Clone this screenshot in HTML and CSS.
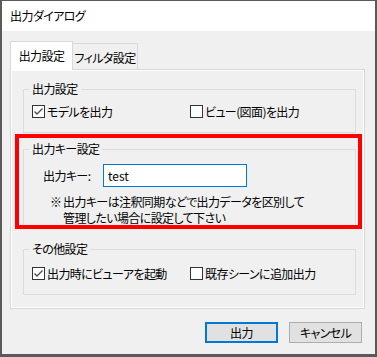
FILE: index.html
```html
<!DOCTYPE html>
<html lang="ja">
<head>
    <meta charset="UTF-8">
    <meta name="viewport" content="width=device-width, initial-scale=1.0">
    <title>出力ダイアログ</title>
    <link rel="stylesheet" href="styles.css">
</head>
<body>

    <div class="window">
        <div class="titlebar">出力ダイアログ</div>

        <div class="body">
            <div class="tabs">
                <div class="tab active">出力設定</div>
                <div class="tab">フィルタ設定</div>
            </div>

            <div class="panel">
                <fieldset class="group group-output">
                    <legend>出力設定</legend>
                    <div class="check-row">
                        <label class="check">
                            <span class="box checked">
                                <svg width="11" height="11" viewBox="0 0 11 11"><path d="M1.5 5.5 L4 8 L9.5 2.5" fill="none" stroke="#4a4a4a" stroke-width="1.3"/></svg>
                            </span>
                            モデルを出力
                        </label>
                        <label class="check">
                            <span class="box"></span>
                            ビュー(図面)を出力
                        </label>
                    </div>
                </fieldset>

                <fieldset class="group group-key">
                    <legend>出力キー設定</legend>
                    <div class="key-row">
                        <label for="outputKey" class="key-label">出力キー:</label>
                        <input type="text" id="outputKey" class="key-input" value="test">
                    </div>
                    <div class="note">
                        <span class="note-mark">※</span>
                        <span class="note-text">出力キーは注釈同期などで出力データを区別して<br>管理したい場合に設定して下さい</span>
                    </div>
                </fieldset>

                <fieldset class="group group-other">
                    <legend>その他設定</legend>
                    <div class="check-row">
                        <label class="check">
                            <span class="box checked">
                                <svg width="11" height="11" viewBox="0 0 11 11"><path d="M1.5 5.5 L4 8 L9.5 2.5" fill="none" stroke="#4a4a4a" stroke-width="1.3"/></svg>
                            </span>
                            出力時にビューアを起動
                        </label>
                        <label class="check">
                            <span class="box"></span>
                            既存シーンに追加出力
                        </label>
                    </div>
                </fieldset>
            </div>

            <div class="actions">
                <button class="btn primary">出力</button>
                <button class="btn">キャンセル</button>
            </div>
        </div>

        <!-- annotation frame -->
        <div class="highlight"></div>
    </div>

</body>
</html>
```

FILE: styles.css
```css
/* General Styles */
body {
    margin: 0;
    padding: 0;
    font-family: "Noto Sans CJK JP", "Noto Sans", sans-serif;
    font-size: 12px;
    font-feature-settings: "palt";
    letter-spacing: -0.6px;
    color: #000;
}

.window {
    position: relative;
    width: 377px;
    height: 357px;
    box-sizing: border-box;
    background-color: #f0f0f0;
    border-top: 1px solid #5a5a5a;
    border-left: 2px solid #5a5a5a;
    border-right: 2px solid #5a5a5a;
    border-bottom: 3px solid #5a5a5a;
}

.titlebar {
    height: 30px;
    background-color: #fff;
    padding-left: 8px;
    display: flex;
    align-items: center;
    line-height: 14px;
}

.body {
    padding: 10px 10px 0 8px;
}

/* Tabs */
.tabs {
    display: flex;
    align-items: flex-end;
    height: 29px;
    margin-bottom: -1px;
    position: relative;
    z-index: 1;
}

.tab {
    box-sizing: border-box;
    border: 1px solid #d9d9d9;
    border-bottom: none;
    display: flex;
    align-items: center;
    justify-content: center;
    white-space: nowrap;
}

.tab.active {
    width: 63px;
    height: 29px;
    background-color: #fff;
    padding-bottom: 1px;
}

.tab:not(.active) {
    width: 65px;
    height: 26px;
    margin-bottom: 1px;
    border-left: none;
    padding-top: 1px;
}

.panel {
    box-sizing: border-box;
    width: 355px;
    height: 240px;
    border: 1px solid #d9d9d9;
    box-shadow: inset 0 0 0 1px #fff;
    padding: 12px 8px 0 12px;
}

/* Group boxes */
.group {
    margin: 0;
    min-width: 0;
    border: 1px solid #dcdcdc;
    padding: 0 0 0 5px;
}

.group legend {
    padding: 0 3px;
    line-height: 14px;
}

.group-output {
    padding-top: 7px;
    padding-bottom: 12px;
}

.group-key {
    margin-top: 9px;
    padding-top: 8px;
    padding-bottom: 1px;
}

.group-other {
    margin-top: 14px;
    padding-top: 9px;
    padding-bottom: 12px;
}

.check-row {
    display: grid;
    grid-template-columns: 158px 1fr;
    margin-left: 3px;
    height: 17px;
}

.check {
    display: flex;
    align-items: center;
    gap: 2px;
    line-height: 17px;
}

.box {
    box-sizing: border-box;
    width: 13px;
    height: 13px;
    border: 1px solid #333;
    background-color: #fff;
    display: flex;
    align-items: center;
    justify-content: center;
}

.key-row {
    display: flex;
    align-items: center;
    margin-left: 14px;
}

.key-label {
    width: 60px;
}

.key-input {
    box-sizing: border-box;
    width: 144px;
    height: 23px;
    margin: 0;
    border: 1px solid #0078d7;
    padding: 0 4px;
    font-family: inherit;
    font-size: 12px;
    font-feature-settings: "palt";
    letter-spacing: 0;
    outline: none;
}

.note {
    display: flex;
    margin: 7px 0 0 21px;
    line-height: 16px;
}

.note-mark {
    width: 13px;
}

/* Buttons */
.actions {
    display: flex;
    justify-content: flex-end;
    gap: 11px;
    margin-top: 13px;
    padding-right: 3px;
}

.btn {
    box-sizing: border-box;
    width: 73px;
    height: 21px;
    margin: 0;
    padding: 0;
    border: 1px solid #adadad;
    background-color: #e1e1e1;
    font-family: inherit;
    font-size: 12px;
    font-feature-settings: "palt";
    letter-spacing: -0.6px;
    color: #000;
}

.btn.primary {
    border: 2px solid #0078d7;
}

.highlight {
    position: absolute;
    left: 13px;
    top: 133px;
    width: 347px;
    height: 95px;
    box-sizing: border-box;
    border: 4px solid #ff0000;
    pointer-events: none;
}
```
